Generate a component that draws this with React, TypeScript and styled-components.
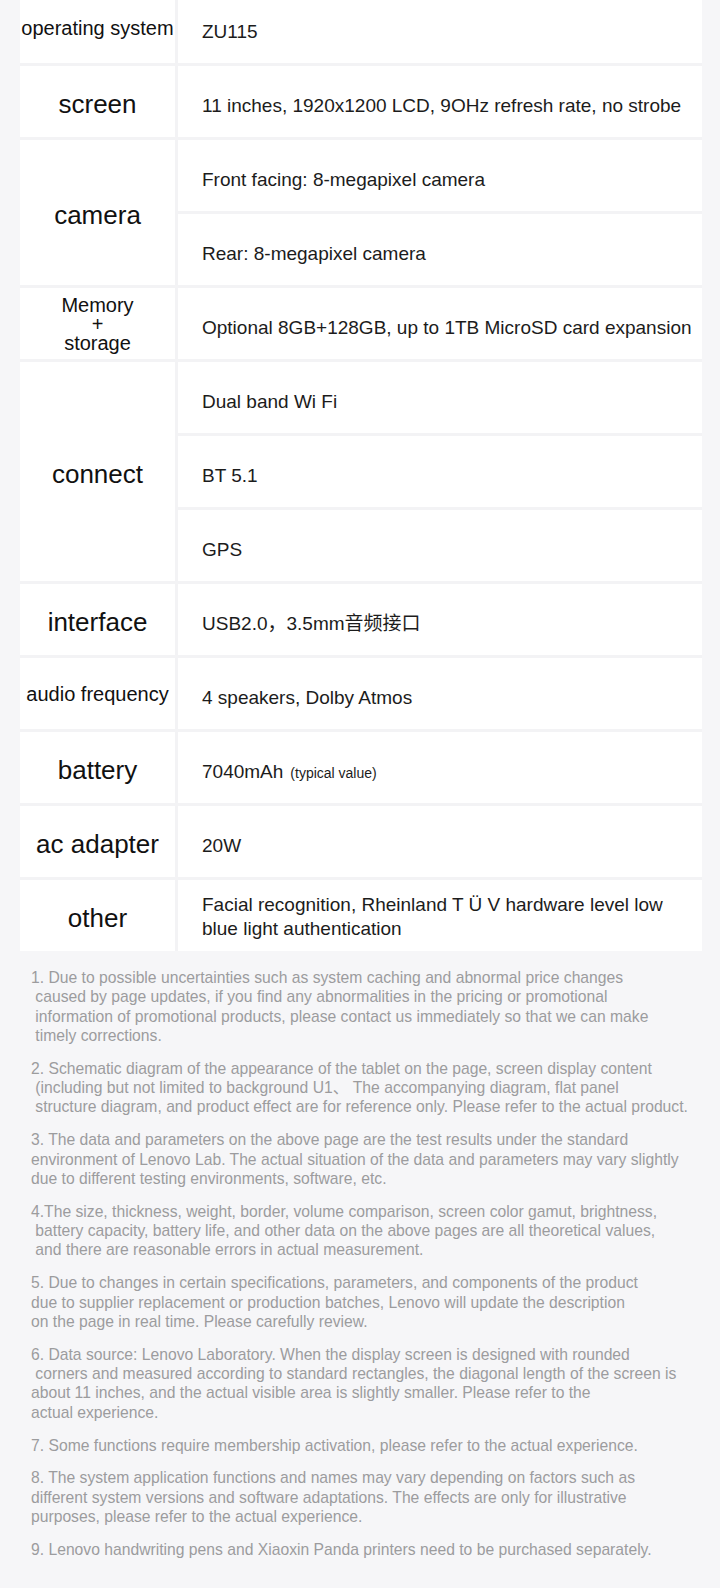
import React from "react";
import styled, { createGlobalStyle } from "styled-components";

const GlobalStyle = createGlobalStyle`
  html, body {
    margin: 0;
    padding: 0;
    background: #f6f6f8;
  }
  body {
    font-family: "Liberation Sans", Arial, "Noto Sans CJK SC", sans-serif;
  }
`;

const Page = styled.div`
  width: 720px;
  min-height: 1588px;
  background: #f6f6f8;
  overflow: hidden;
`;

const Table = styled.div`
  margin: -8px 18px 0 20px;
  display: flex;
  flex-direction: column;
  gap: 3px;
  background: #f3f3f5;
`;

const Row = styled.div`
  display: grid;
  grid-template-columns: 155px 1fr;
  gap: 3px;
`;

const Label = styled.div<{ $small?: boolean }>`
  background: #fff;
  display: flex;
  align-items: center;
  justify-content: center;
  text-align: center;
  color: #111;
  font-size: ${(p) => (p.$small ? "20px" : "26px")};
  line-height: ${(p) => (p.$small ? "19px" : "normal")};
  white-space: nowrap;
  padding-top: ${(p) => (p.$small ? "2px" : "6px")};
  box-sizing: border-box;
`;

const Values = styled.div`
  display: flex;
  flex-direction: column;
  gap: 3px;
`;

const Value = styled.div<{ $wrap?: boolean }>`
  background: #fff;
  height: 71px;
  box-sizing: border-box;
  display: flex;
  align-items: center;
  padding: ${(p) => (p.$wrap ? "2px" : "9px")} 10px 0 24px;
  color: #1c1c1c;
  font-size: 19px;
  line-height: 24px;
  white-space: nowrap;
`;

const Small = styled.span`
  font-size: 14px;
  margin-left: 7px;
`;

const Notes = styled.div`
  padding: 17px 0 30px 31px;
  color: #9c9c9e;
  font-size: 15.7px;
  line-height: 19.33px;
`;

const Note = styled.p<{ $last?: boolean }>`
  margin: 0 0 ${(p) => (p.$last ? 0 : 13.5)}px;
  white-space: pre;
`;

type Spec = { label: React.ReactNode; small?: boolean; values: React.ReactNode[]; wrap?: boolean };

const specs: Spec[] = [
  { label: "operating system", small: true, values: ["ZU115"] },
  { label: "screen", values: ["11 inches, 1920x1200 LCD, 9OHz refresh rate, no strobe"] },
  { label: "camera", values: ["Front facing: 8-megapixel camera", "Rear: 8-megapixel camera"] },
  {
    label: (
      <>
        Memory
        <br />+<br />
        storage
      </>
    ),
    small: true,
    values: ["Optional 8GB+128GB, up to 1TB MicroSD card expansion"],
  },
  { label: "connect", values: ["Dual band Wi Fi", "BT 5.1", "GPS"] },
  { label: "interface", values: ["USB2.0，3.5mm音频接口"] },
  { label: "audio frequency", small: true, values: ["4 speakers, Dolby Atmos"] },
  {
    label: "battery",
    values: [
      <>
        7040mAh<Small>(typical value)</Small>
      </>,
    ],
  },
  { label: "ac adapter", values: ["20W"] },
  {
    label: "other",
    wrap: true,
    values: [
      <>
        Facial recognition, Rheinland T Ü V hardware level low
        <br />
        blue light authentication
      </>,
    ],
  },
];

const notes: string[] = [
  "1. Due to possible uncertainties such as system caching and abnormal price changes\n caused by page updates, if you find any abnormalities in the pricing or promotional\n information of promotional products, please contact us immediately so that we can make\n timely corrections.",
  "2. Schematic diagram of the appearance of the tablet on the page, screen display content\n (including but not limited to background U1、 The accompanying diagram, flat panel\n structure diagram, and product effect are for reference only. Please refer to the actual product.",
  "3. The data and parameters on the above page are the test results under the standard\nenvironment of Lenovo Lab. The actual situation of the data and parameters may vary slightly\ndue to different testing environments, software, etc.",
  "4.The size, thickness, weight, border, volume comparison, screen color gamut, brightness,\n battery capacity, battery life, and other data on the above pages are all theoretical values,\n and there are reasonable errors in actual measurement.",
  "5. Due to changes in certain specifications, parameters, and components of the product\ndue to supplier replacement or production batches, Lenovo will update the description\non the page in real time. Please carefully review.",
  "6. Data source: Lenovo Laboratory. When the display screen is designed with rounded\n corners and measured according to standard rectangles, the diagonal length of the screen is\nabout 11 inches, and the actual visible area is slightly smaller. Please refer to the\nactual experience.",
  "7. Some functions require membership activation, please refer to the actual experience.",
  "8. The system application functions and names may vary depending on factors such as\ndifferent system versions and software adaptations. The effects are only for illustrative\npurposes, please refer to the actual experience.",
  "9. Lenovo handwriting pens and Xiaoxin Panda printers need to be purchased separately.",
];

export default function App() {
  return (
    <>
      <GlobalStyle />
      <Page>
        <Table>
          {specs.map((s, i) => (
            <Row key={i}>
              <Label $small={s.small}>{s.label}</Label>
              <Values>
                {s.values.map((v, j) => (
                  <Value key={j} $wrap={s.wrap}>
                    <span>{v}</span>
                  </Value>
                ))}
              </Values>
            </Row>
          ))}
        </Table>
        <Notes>
          {notes.map((n, i) => (
            <Note key={i} $last={i === notes.length - 1}>
              {n}
            </Note>
          ))}
        </Notes>
      </Page>
    </>
  );
}
